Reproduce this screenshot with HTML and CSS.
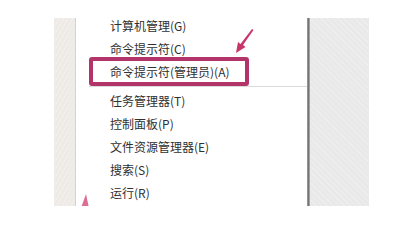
FILE: index.html
```html
<!DOCTYPE html>
<html lang="zh">
<head>
<meta charset="utf-8">
<link rel="stylesheet" href="styles.css">
</head>
<body>
<div class="shot">
  <div class="strip-left"></div>
  <div class="menu">
    <ul class="items">
      <li class="item">计算机管理(G)</li>
      <li class="item">命令提示符(C)</li>
      <li class="item">命令提示符(管理员)(A)</li>
      <li class="sep"></li>
      <li class="item">任务管理器(T)</li>
      <li class="item">控制面板(P)</li>
      <li class="item">文件资源管理器(E)</li>
      <li class="item">搜索(S)</li>
      <li class="item">运行(R)</li>
    </ul>
    <div class="highlight"></div>
    <svg class="arrow" width="20" height="26" viewBox="0 0 20 26">
      <path d="M17 0 L18.5 1 L8 16 L10.5 18 L1 24 L3 13 L5.5 15 Z" fill="#c8356c"/>
    </svg>
    <svg class="arrow2" width="10" height="14" viewBox="0 0 10 14">
      <path d="M6 0 L9 14 L1 14 Z" fill="#d7537f" opacity="0.85"/>
    </svg>
  </div>
  <div class="edge"></div>
  <div class="strip-right"></div>
</div>
</body>
</html>
```
FILE: styles.css
```css
html, body {
  margin: 0;
  padding: 0;
  background: #ffffff;
}
body {
  width: 418px;
  height: 228px;
  overflow: hidden;
  font-family: "Noto Sans CJK SC", "Noto Sans", sans-serif;
}
.shot {
  display: flex;
  margin-top: 18px;
  margin-left: 54px;
  height: 188px;
  width: 315px;
}
.strip-left {
  width: 21px;
  border-right: 1px solid #d8d2ce;
  background-color: #eeeae6;
  background-image: repeating-linear-gradient(120deg, rgba(255,255,255,0.25) 0 1px, rgba(0,0,0,0) 1px 4px);
}
.menu {
  position: relative;
  width: 231px;
  background: #ffffff;
  overflow: hidden;
}
.items {
  list-style: none;
  margin: -4.5px 0 0 0;
  padding: 0;
}
.item {
  height: 23px;
  line-height: 23px;
  padding-left: 34px;
  font-size: 12px;
  color: #303030;
  white-space: nowrap;
}
.sep {
  height: 6px;
  margin-left: 13px;
  box-sizing: border-box;
  border-bottom: 1px solid #dadada;
  position: relative;
  top: -2px;
}
.highlight {
  position: absolute;
  left: 13px;
  top: 39px;
  width: 160px;
  height: 29px;
  box-sizing: border-box;
  border: 4px solid #b23468;
  border-radius: 3px;
}
.arrow {
  position: absolute;
  left: 159px;
  top: 11px;
}
.arrow2 {
  position: absolute;
  left: 4px;
  top: 176px;
}
.edge {
  width: 3px;
  background: linear-gradient(90deg, #a0a0a0, #767676 50%, #b4b4b4);
}
.strip-right {
  width: 59px;
  background-color: #e9e9e9;
  background-image: repeating-linear-gradient(45deg, rgba(255,255,255,0.22) 0 1px, rgba(0,0,0,0) 1px 4px);
}
```
